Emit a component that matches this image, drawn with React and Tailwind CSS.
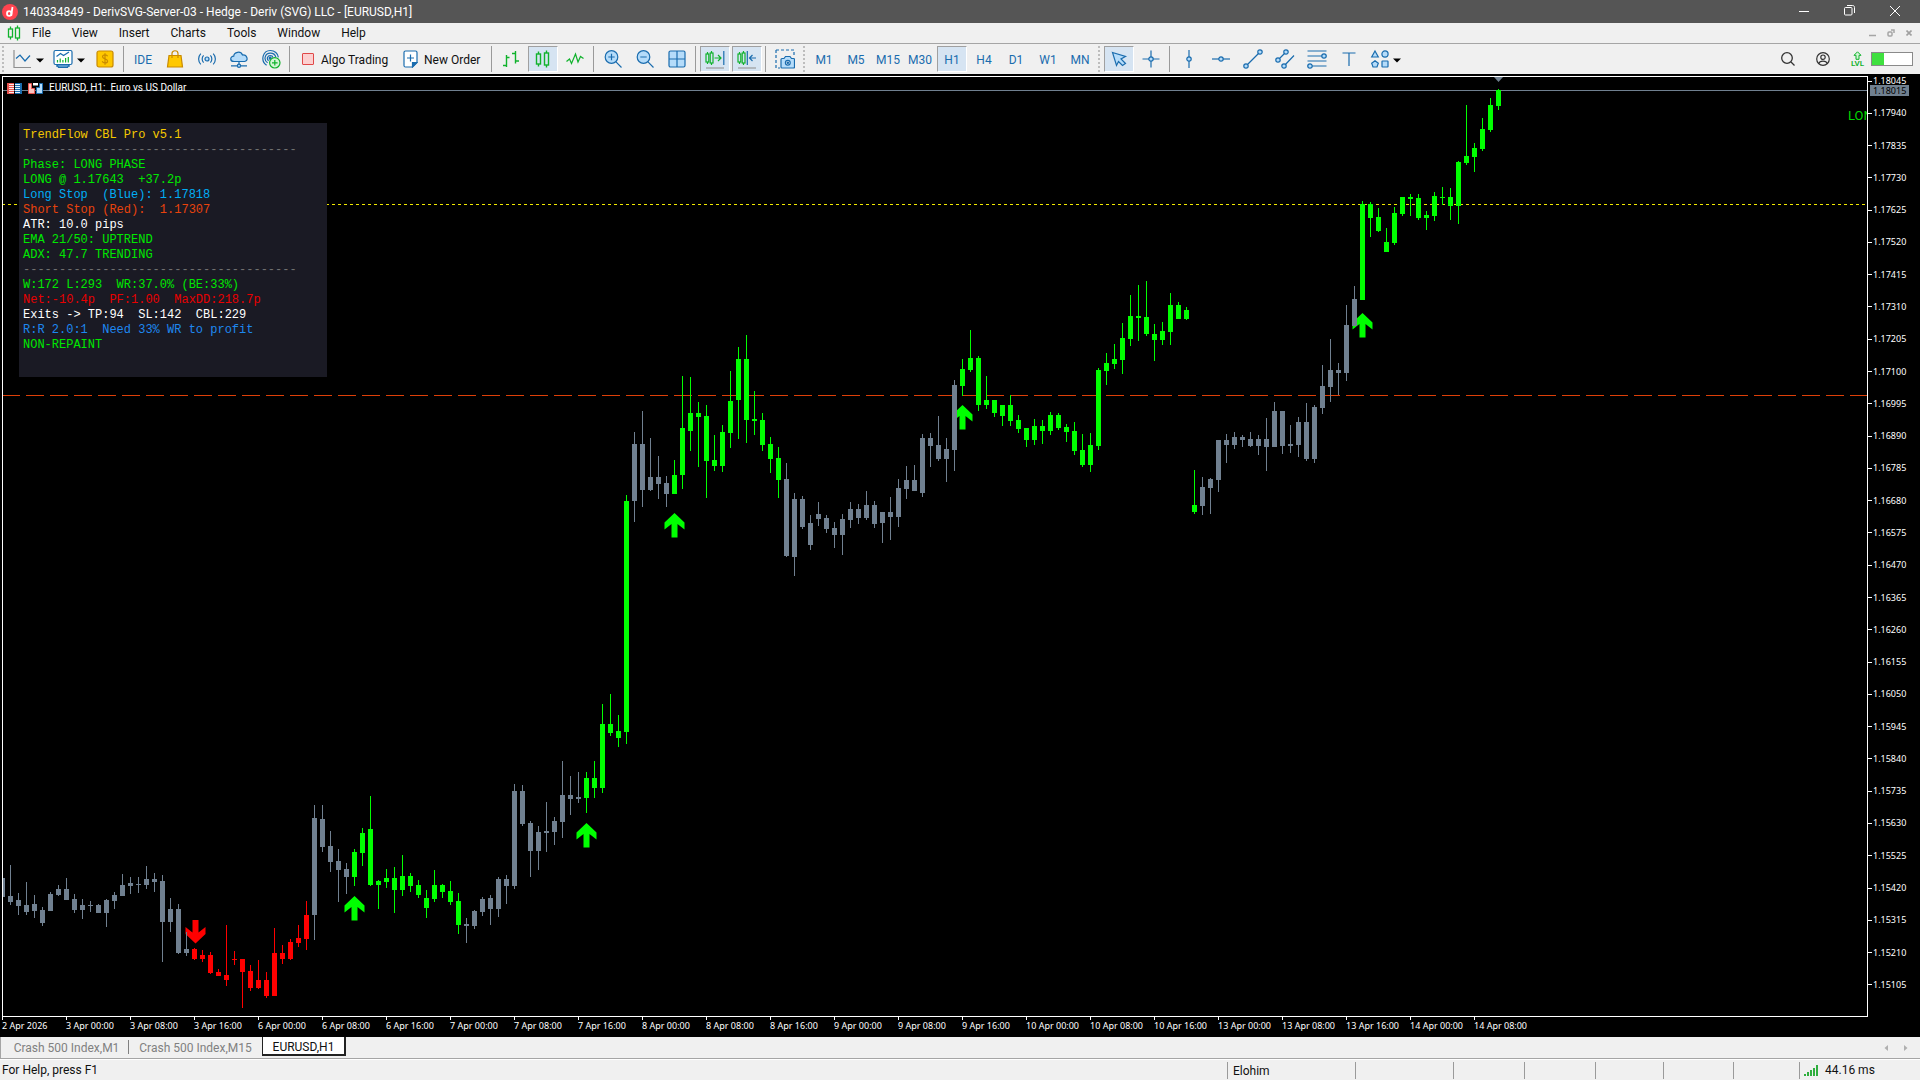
import React from "react";

const BLUE = "#1a6cae";
const SKY = "#b5dcfa";
const GREEN = "#10b22c";
const AMBER = "#c98a00";

const GRAY = "#708090";
const LIME = "#00ff00";
const RED = "#ff0000";

const PITCH = 8;

/* Runs of candles that share a colour; each candle is [high, bodyTop, bodyBottom, low]. */
const RUNS = [
  [GRAY, [
    [878, 878, 897, 897], [865, 896, 902, 905], [893, 900, 906, 915], [882, 905, 912, 915], [895, 904, 911, 918],
    [907, 910, 923, 926], [892, 894, 911, 911], [885, 889, 895, 896], [878, 889, 900, 900], [894, 899, 910, 913],
    [899, 905, 910, 919], [901, 905, 906, 912], [904, 905, 913, 913], [899, 900, 913, 927], [892, 895, 901, 909],
    [874, 885, 896, 896], [877, 883, 886, 894], [877, 884, 885, 893], [866, 879, 885, 889], [873, 879, 882, 892],
    [875, 881, 922, 962], [898, 909, 922, 932], [904, 909, 953, 954], [932, 949, 953, 956],
  ]],
  [RED, [
    [948, 949, 959, 960], [950, 955, 959, 962], [952, 955, 973, 974], [969, 972, 976, 976], [925, 975, 980, 986],
    [951, 959, 960, 965], [959, 959, 972, 1008], [965, 971, 988, 991], [960, 980, 988, 989], [972, 980, 996, 998],
    [928, 953, 996, 996], [945, 953, 959, 964], [939, 942, 959, 960], [925, 938, 943, 947], [901, 915, 939, 950],
  ]],
  [GRAY, [
    [805, 818, 915, 940], [805, 819, 847, 852], [831, 846, 862, 872], [849, 861, 870, 902], [863, 869, 877, 894],
  ]],
  [LIME, [
    [849, 852, 877, 886], [828, 833, 853, 866], [796, 829, 885, 886], [880, 881, 885, 909], [869, 878, 882, 888],
    [867, 878, 890, 913], [855, 876, 890, 896], [873, 876, 886, 892], [880, 885, 895, 898], [890, 898, 908, 918],
    [870, 885, 899, 902], [884, 885, 892, 898], [881, 891, 902, 905], [893, 901, 925, 934],
  ]],
  [GRAY, [
    [918, 924, 926, 943], [910, 911, 926, 929], [897, 899, 912, 916], [895, 898, 909, 925], [877, 879, 909, 917],
    [875, 879, 886, 904], [784, 791, 886, 889], [785, 791, 824, 826], [821, 823, 851, 877], [826, 832, 851, 870],
    [802, 831, 833, 852], [817, 821, 832, 845], [761, 795, 822, 838], [776, 795, 799, 815], [772, 797, 799, 803],
  ]],
  [LIME, [
    [772, 778, 798, 813], [761, 778, 788, 798], [704, 724, 788, 793], [694, 724, 733, 736], [715, 731, 738, 747],
    [495, 501, 732, 744],
  ]],
  [GRAY, [
    [432, 444, 501, 522], [411, 444, 490, 507], [438, 477, 490, 491], [456, 477, 484, 499], [476, 483, 494, 507],
  ]],
  [LIME, [
    [460, 475, 494, 494], [376, 428, 475, 489], [377, 413, 431, 451], [402, 413, 417, 467], [405, 416, 461, 498],
    [435, 460, 466, 471], [425, 432, 466, 472], [371, 401, 433, 448], [347, 359, 400, 439], [335, 359, 420, 443],
    [391, 419, 421, 435], [413, 420, 445, 451], [437, 444, 459, 473], [447, 458, 480, 498],
  ]],
  [GRAY, [
    [463, 479, 556, 557], [493, 499, 557, 576], [496, 499, 527, 529], [515, 523, 545, 550], [502, 514, 519, 526],
    [515, 518, 529, 533], [522, 528, 535, 548], [514, 519, 535, 555], [502, 509, 520, 528], [504, 509, 518, 524],
    [491, 505, 518, 520], [501, 505, 524, 528], [512, 512, 523, 543], [497, 512, 517, 540], [479, 488, 517, 527],
    [466, 480, 489, 499], [465, 480, 491, 491], [434, 438, 493, 497], [433, 438, 446, 467], [416, 445, 459, 461],
    [438, 449, 459, 482], [380, 385, 450, 471],
  ]],
  [LIME, [
    [359, 369, 386, 396], [330, 358, 370, 372], [356, 358, 405, 411], [376, 400, 405, 409], [400, 400, 413, 417],
    [405, 405, 416, 426], [395, 405, 421, 426], [415, 420, 429, 433], [428, 428, 440, 447], [419, 426, 440, 445],
    [420, 426, 431, 444], [412, 415, 431, 435], [413, 415, 428, 430], [424, 427, 432, 442], [422, 431, 451, 455],
    [434, 450, 465, 467], [433, 445, 465, 472], [368, 370, 446, 450], [353, 363, 371, 385], [344, 359, 364, 369],
    [323, 338, 360, 374], [295, 316, 339, 346], [285, 316, 318, 341], [281, 317, 334, 336], [324, 334, 340, 361],
    [322, 331, 340, 345], [293, 305, 332, 345], [302, 305, 319, 319], [307, 310, 319, 320], [470, 505, 512, 514],
  ]],
  [GRAY, [
    [477, 487, 506, 515], [478, 479, 488, 514], [440, 440, 480, 492], [434, 440, 445, 463], [432, 437, 445, 449],
    [435, 437, 440, 447], [432, 439, 446, 447], [435, 439, 446, 455], [418, 439, 447, 471], [402, 411, 447, 447],
    [411, 411, 446, 454], [425, 444, 446, 453], [417, 422, 445, 457], [403, 422, 459, 461], [405, 407, 459, 463],
    [365, 386, 408, 414], [339, 370, 387, 402], [363, 370, 373, 395], [305, 325, 373, 381], [286, 299, 326, 326],
  ]],
  [LIME, [
    [201, 204, 300, 300], [202, 204, 218, 237], [208, 217, 231, 232], [228, 242, 252, 252], [207, 213, 243, 245],
    [197, 197, 214, 216], [194, 197, 199, 216], [194, 198, 218, 220], [211, 215, 218, 230], [192, 196, 216, 221],
    [187, 197, 198, 205], [188, 197, 206, 220], [161, 162, 206, 224], [105, 156, 163, 165], [143, 148, 157, 172],
    [118, 129, 149, 151], [98, 105, 130, 132], [89, 90, 106, 110],
  ]],
];

const CANDLES = RUNS.flatMap(([color, list]) => list.map((c) => [color, ...c]));

/* Entry signals: [candle index, y of the arrow's top, direction] */
const SIGNALS = [
  [24, 920, "down"],
  [44, 896, "up"],
  [73, 823, "up"],
  [84, 513, "up"],
  [120, 405, "up"],
  [170, 313, "up"],
];

const PRICES = Array.from({ length: 29 }, (_, i) => ((118045 - i * 105) / 100000).toFixed(5));

const TIMES = [
  "2 Apr 2026", "3 Apr 00:00", "3 Apr 08:00", "3 Apr 16:00", "6 Apr 00:00", "6 Apr 08:00", "6 Apr 16:00",
  "7 Apr 00:00", "7 Apr 08:00", "7 Apr 16:00", "8 Apr 00:00", "8 Apr 08:00", "8 Apr 16:00", "9 Apr 00:00",
  "9 Apr 08:00", "9 Apr 16:00", "10 Apr 00:00", "10 Apr 08:00", "10 Apr 16:00", "13 Apr 00:00", "13 Apr 08:00",
  "13 Apr 16:00", "14 Apr 00:00", "14 Apr 08:00",
];

const RULE = "-".repeat(38);

const PANEL = [
  ["TrendFlow CBL Pro v5.1", "text-[#f5c800]"],
  [RULE, "text-[#707070]"],
  ["Phase: LONG PHASE", "text-[#00e800]"],
  ["LONG @ 1.17643  +37.2p", "text-[#00e800]"],
  ["Long Stop  (Blue): 1.17818", "text-[#00aef5]"],
  ["Short Stop (Red):  1.17307", "text-[#e8430c]"],
  ["ATR: 10.0 pips", "text-white"],
  ["EMA 21/50: UPTREND", "text-[#00e800]"],
  ["ADX: 47.7 TRENDING", "text-[#00e800]"],
  [RULE, "text-[#707070]"],
  ["W:172 L:293  WR:37.0% (BE:33%)", "text-[#00e800]"],
  ["Net:-10.4p  PF:1.00  MaxDD:218.7p", "text-[#e80000]"],
  ["Exits -> TP:94  SL:142  CBL:229", "text-white"],
  ["R:R 2.0:1  Need 33% WR to profit", "text-[#1e88f0]"],
  ["NON-REPAINT", "text-[#00e800]"],
];

function Icon({ children, size = 20, stroke = BLUE, fill = "none", width = 1.2 }) {
  return (
    <svg
      width={size}
      height={size}
      viewBox="0 0 20 20"
      fill={fill}
      stroke={stroke}
      strokeWidth={width}
      aria-hidden="true"
      className="shrink-0"
    >
      {children}
    </svg>
  );
}

const DropArrow = () => (
  <svg width="8" height="5" viewBox="0 0 8 5" aria-hidden="true" className="mt-0.5 shrink-0">
    <path d="M0 0.5H8L4 4.5Z" fill="#000" />
  </svg>
);

const icons = {
  line: (
    <Icon>
      <path d="M2 1V18.5H19" stroke="#8f8f8f" />
      <path d="M4 9.5L8 6L13 12L18 6.5" />
    </Icon>
  ),
  profile: (
    <Icon>
      <path d="M3.5 15L5.5 18.5H14.5L16.5 15" fill={SKY} />
      <rect x="1" y="1.5" width="18" height="14" rx="1.5" fill="#fff" />
      <path d="M3.5 7.5L7.5 4.5L10.5 6.5L16 3" />
      <path d="M4.5 13.5V11M7.2 13.5V9.5M9.9 13.5V11M12.6 13.5V9M15.3 13.5V8" stroke={GREEN} />
      <path d="M3 17H17" />
    </Icon>
  ),
  dollar: (
    <Icon stroke={AMBER}>
      <rect x="2" y="2" width="16" height="16" rx="2" fill="#ffc800" />
      <path d="M12.6 7.3C12.2 6.3 11.2 5.9 10 5.9C8.5 5.9 7.5 6.7 7.5 7.8C7.5 10.4 12.6 9.3 12.6 12C12.6 13.2 11.5 14 10 14C8.6 14 7.6 13.4 7.2 12.3M10 4.3V15.7" />
    </Icon>
  ),
  bag: (
    <Icon stroke={AMBER}>
      <path d="M4 6.5H16L17.5 18H2.5Z" fill="#ffc800" />
      <path d="M7 9V4.5C7 0.8 13 0.8 13 4.5V9" />
    </Icon>
  ),
  signal: (
    <Icon>
      <circle cx="10" cy="10" r="2" fill={SKY} />
      <path d="M6.6 6.4C4.7 8.3 4.7 11.7 6.6 13.6M13.4 6.4C15.3 8.3 15.3 11.7 13.4 13.6M3.8 4.6C0.9 7.6 0.9 12.4 3.8 15.4M16.2 4.6C19.1 7.6 19.1 12.4 16.2 15.4" />
    </Icon>
  ),
  cloud: (
    <Icon>
      <path d="M5 12.5C0.7 12.5 0.7 7.3 4.7 7.2C5 3 11.6 1.4 13.5 6C18.3 5.6 20 11.9 15.5 12.5Z" fill={SKY} />
      <path d="M10 12.5V15.5M2 16.8H8M12 16.8H18" />
      <circle cx="10" cy="16.8" r="1.6" fill={SKY} />
    </Icon>
  ),
  radar: (
    <Icon>
      <path d="M5.6 16.3C-1 11.5 1.8 1.5 9.4 1.5C13.6 1.5 17 4.6 17.4 8.4M6.6 13.8C2 10.6 4 4.2 9.4 4.2C12 4.2 14.2 5.8 14.8 8.2M7.6 11.7C5.2 9.6 6.6 6.7 9.2 6.7C10.7 6.7 11.8 7.6 12 8.6" />
      <circle cx="9.2" cy="9.2" r="1" fill={BLUE} />
      <circle cx="13.8" cy="13.8" r="5.2" fill="#d3f5d6" stroke={GREEN} />
      <path d="M13.8 11V16.6M11 13.8H16.6" stroke={GREEN} />
    </Icon>
  ),
  bars: (
    <Icon stroke={GREEN} width={1.4}>
      <path d="M5.5 6V18M2 16.5H5.5M5.5 8.5H8.5M14.5 2V14.5M11 4.5H14.5M14.5 12H18" />
    </Icon>
  ),
  candles: (
    <Icon stroke={GREEN} width={1.4}>
      <path d="M5.5 2.5V5M5.5 15V17.5M13.5 1.5V4M13.5 16V18.5" />
      <rect x="3.5" y="5" width="4" height="10" />
      <rect x="11.5" y="4" width="4" height="12" />
    </Icon>
  ),
  zigzag: (
    <Icon stroke={GREEN}>
      <path d="M1.5 12.5L4.5 10L6.5 14.5L10.5 5L13 13L15.5 7.5L18.5 9.5" />
    </Icon>
  ),
  zoomIn: (
    <Icon>
      <circle cx="8.5" cy="8" r="6.3" fill={SKY} />
      <path d="M13 12.8L18.5 18.5M8.5 4.8V11.2M5.3 8H11.7" />
    </Icon>
  ),
  zoomOut: (
    <Icon>
      <circle cx="8.5" cy="8" r="6.3" fill={SKY} />
      <path d="M13 12.8L18.5 18.5M5.3 8H11.7" />
    </Icon>
  ),
  grid: (
    <Icon>
      <rect x="2" y="2" width="16" height="16" rx="1.5" fill={SKY} />
      <path d="M10 2V18M2 10H18" />
    </Icon>
  ),
  scroll: (
    <Icon>
      <g stroke={GREEN}>
        <path d="M2.5 3V5M2.5 13V15M6.5 2V4M6.5 14V16" />
        <rect x="1" y="5" width="2.8" height="8" />
        <rect x="5.2" y="4" width="2.8" height="10" />
        <path d="M9.5 9H16M13 6L16 9L13 12" />
      </g>
      <path d="M18.8 2V16" />
      <path d="M1 19H19" stroke="#9a9a9a" />
    </Icon>
  ),
  shift: (
    <Icon>
      <g stroke={GREEN}>
        <path d="M2.5 3V5M2.5 13V15M6.5 2V4M6.5 14V16" />
        <rect x="1" y="5" width="2.8" height="8" />
        <rect x="5.2" y="4" width="2.8" height="10" />
      </g>
      <path d="M10.3 2V16M12.5 9H19M15.5 6L12.5 9L15.5 12" />
      <path d="M1 19H19" stroke="#9a9a9a" />
    </Icon>
  ),
  camera: (
    <Icon>
      <path d="M1 1H19V7M1 1V19H5" strokeDasharray="3 2" />
      <path d="M6 10.5C6 9.8 6.5 9.5 7 9.5H9L10.5 7.5H15L16.5 9.5H18.5C19 9.5 19.5 9.8 19.5 10.5V18C19.5 18.6 19 19 18.5 19H7C6.5 19 6 18.6 6 18Z" fill={SKY} />
      <circle cx="12.8" cy="13.8" r="2.4" fill="#fff" />
      <circle cx="12.8" cy="13.8" r="0.7" fill={BLUE} />
    </Icon>
  ),
  cursor: (
    <Icon>
      <path d="M3.5 3.5L16.5 7.5L12 10L16.5 14.5L13.5 16.5L9.5 12.5L7.5 16.5Z" fill={SKY} />
    </Icon>
  ),
  cross: (
    <Icon>
      <path d="M10 1.5V18.5M1.5 10H18.5" />
      <circle cx="10" cy="10" r="2.2" fill={SKY} />
    </Icon>
  ),
  vline: (
    <Icon>
      <path d="M10 1V19" />
      <circle cx="10" cy="10" r="2.2" fill={SKY} />
    </Icon>
  ),
  hline: (
    <Icon>
      <path d="M1 10H19" />
      <circle cx="10" cy="10" r="2.2" fill={SKY} />
    </Icon>
  ),
  trend: (
    <Icon>
      <path d="M3 17L17 3" />
      <circle cx="3" cy="17" r="2.2" fill={SKY} />
      <circle cx="17" cy="3" r="2.2" fill={SKY} />
    </Icon>
  ),
  channel: (
    <Icon>
      <path d="M3 11L11 3M9 17L19 6.5" />
      <circle cx="3" cy="11" r="2.2" fill={SKY} />
      <circle cx="11" cy="3" r="2.2" fill={SKY} />
      <circle cx="9" cy="17" r="2.2" fill={SKY} />
    </Icon>
  ),
  fibo: (
    <Icon>
      <path d="M0.5 2H19.5M0.5 7H19.5M0.5 12H19.5M0.5 17H19.5" />
      <circle cx="17" cy="7" r="2.2" fill={SKY} />
      <circle cx="3" cy="17" r="2.2" fill={SKY} />
    </Icon>
  ),
  label: (
    <Icon>
      <path d="M3.5 4H16.5M10 4V17" />
    </Icon>
  ),
  shapes: (
    <Icon>
      <path d="M5 2L8.3 8H1.7Z" fill={SKY} />
      <circle cx="15" cy="5" r="3.1" fill={SKY} />
      <path d="M5 11.8L8.3 14.2L7 18H3L1.7 14.2Z" fill={SKY} />
      <rect x="12" y="12" width="6" height="6" rx="0.5" fill={SKY} />
    </Icon>
  ),
};

const Sep = () => <div className="ml-[3px] mr-1 h-[26px] w-px shrink-0 bg-[#9a9a9a]" />;

const Grip = () => <div className="ml-[3px] mr-1 h-[26px] w-0 shrink-0 border-l-2 border-dotted border-[#bdbdbd]" />;

const Group = ({ children }) => <div className="flex shrink-0 gap-0.5">{children}</div>;

function Tool({ label, on = false, children }) {
  return (
    <button
      type="button"
      aria-label={label}
      aria-pressed={on}
      className={
        "flex h-[26px] w-[30px] items-center justify-center border " +
        (on ? "border-b-white border-l-[#a0a0a0] border-r-white border-t-[#a0a0a0] bg-[#d6e4f2]" : "border-transparent")
      }
    >
      {children}
    </button>
  );
}

function TitleBar() {
  return (
    <header className="flex h-[23px] shrink-0 items-center bg-[#555555] pl-0.5 pr-0.5 text-white">
      <svg width="16" height="16" viewBox="0 0 16 16" aria-hidden="true">
        <circle cx="8" cy="8" r="8" fill="#ff444f" />
        <g fill="none" stroke="#fff" strokeWidth="1.8">
          <ellipse cx="7.2" cy="9.5" rx="2.2" ry="2.4" />
          <path d="M10.5 3L9.2 11.8" />
        </g>
      </svg>
      <h1 className="ml-[5px] text-[12px] leading-4">140334849 - DerivSVG-Server-03 - Hedge - Deriv (SVG) LLC - [EURUSD,H1]</h1>
      <div className="ml-auto flex pb-0.5">
        <button type="button" aria-label="Minimize" className="flex h-5 w-[46px] items-center justify-center">
          <svg width="10" height="10" viewBox="0 0 10 10"><path d="M0 5.5H10" stroke="#fff" /></svg>
        </button>
        <button type="button" aria-label="Restore" className="flex h-5 w-[45px] items-center justify-center">
          <svg width="11" height="11" viewBox="0 0 11 11" fill="none" stroke="#fff">
            <rect x="0.5" y="2.5" width="7.5" height="7.5" rx="1" />
            <path d="M3 0.5H8.5C9.8 0.5 10.5 1.2 10.5 2.5V8" />
          </svg>
        </button>
        <button type="button" aria-label="Close" className="flex h-5 w-[46px] items-center justify-center">
          <svg width="10" height="10" viewBox="0 0 10 10"><path d="M0 0L10 10M10 0L0 10" stroke="#fff" /></svg>
        </button>
      </div>
    </header>
  );
}

function MenuBar() {
  return (
    <nav className="flex h-[21px] shrink-0 items-center border-b border-[#a5a5a5] pl-[7px] pr-2">
      <svg width="14" height="16" viewBox="0 0 14 16" fill="none" stroke={GREEN} strokeWidth="1.3" aria-hidden="true">
        <path d="M3.5 1.5V4M3.5 12V14.5M10.5 0.5V3M10.5 13V15.5" />
        <rect x="1.5" y="4" width="4" height="8" />
        <rect x="8.5" y="3" width="4" height="10" />
      </svg>
      <div className="ml-[11px] flex gap-[21px]">
        {["File", "View", "Insert", "Charts", "Tools", "Window", "Help"].map((m) => (
          <button key={m} type="button" className="leading-4">{m}</button>
        ))}
      </div>
      <div className="ml-auto flex items-center gap-[11px]">
        <button type="button" aria-label="Minimize chart">
          <svg width="7" height="8" viewBox="0 0 7 8"><path d="M0 6.5H7" stroke="#a5a5a5" strokeWidth="1.5" /></svg>
        </button>
        <button type="button" aria-label="Restore chart">
          <svg width="8" height="8" viewBox="0 0 8 8" fill="none" stroke="#a5a5a5" strokeWidth="1.5">
            <rect x="1" y="3" width="4" height="4" rx="1" />
            <path d="M4 1H7V4" />
          </svg>
        </button>
        <button type="button" aria-label="Close chart">
          <svg width="6" height="6" viewBox="0 0 6 6"><path d="M0.5 0.5L5.5 5.5M5.5 0.5L0.5 5.5" stroke="#a0a0a0" strokeWidth="1.6" /></svg>
        </button>
      </div>
    </nav>
  );
}

function Toolbar() {
  return (
    <div className="flex h-[30px] shrink-0 items-center pr-[7px]" role="toolbar" aria-label="Standard">
      <div className="ml-0.5 mr-1 h-[26px] w-0 border-l-2 border-dotted border-[#bdbdbd]" />
      <button type="button" aria-label="New chart" className="flex w-[41px] items-center gap-1 pl-1">
        {icons.line}
        <DropArrow />
      </button>
      <button type="button" aria-label="Profiles" className="flex w-[41px] items-center gap-1 pl-1">
        {icons.profile}
        <DropArrow />
      </button>
      <Tool label="Market Watch">{icons.dollar}</Tool>
      <Sep />
      <Group>
        <Tool label="IDE"><span className="pt-0.5 text-[12px] text-[#1a6cae]">IDE</span></Tool>
        <Tool label="Market">{icons.bag}</Tool>
        <Tool label="Signals">{icons.signal}</Tool>
        <Tool label="VPS">{icons.cloud}</Tool>
        <Tool label="Copy trading">{icons.radar}</Tool>
      </Group>
      <Sep />
      <Group>
        <button type="button" className="flex h-[26px] w-[100px] items-center gap-[7px] whitespace-nowrap pl-2">
          <span className="size-3 shrink-0 rounded-[1px] border border-[#e04848] bg-[#fcd0d0]" />
          <span className="pt-0.5">Algo Trading</span>
        </button>
        <button type="button" className="flex h-[26px] w-[92px] items-center gap-[6px] whitespace-nowrap pl-[7px]">
          <svg width="15" height="18" viewBox="0 0 15 18" fill="none" stroke={BLUE} strokeWidth="1.2" className="shrink-0" aria-hidden="true">
            <path d="M1 2.5C1 1.5 1.5 1 2.5 1H12.5C13.5 1 14 1.5 14 2.5V12.5L9.5 17H2.5C1.5 17 1 16.5 1 15.5Z" fill="#fff" />
            <path d="M9.5 17V12.5H14Z" fill={BLUE} />
            <path d="M7.5 4.5V11.5M4 8H11" />
          </svg>
          <span className="pt-0.5">New Order</span>
        </button>
      </Group>
      <Sep />
      <Group>
        <Tool label="Bar chart">{icons.bars}</Tool>
        <Tool label="Candlesticks" on>{icons.candles}</Tool>
        <Tool label="Line chart">{icons.zigzag}</Tool>
      </Group>
      <Sep />
      <Group>
        <Tool label="Zoom in">{icons.zoomIn}</Tool>
        <Tool label="Zoom out">{icons.zoomOut}</Tool>
        <Tool label="Tile windows">{icons.grid}</Tool>
      </Group>
      <Sep />
      <Group>
        <Tool label="Auto scroll" on>{icons.scroll}</Tool>
        <Tool label="Chart shift" on>{icons.shift}</Tool>
      </Group>
      <Sep />
      <Tool label="Screenshot">{icons.camera}</Tool>
      <Grip />
      <Group>
        {["M1", "M5", "M15", "M30", "H1", "H4", "D1", "W1", "MN"].map((t) => (
          <Tool key={t} label={t} on={t === "H1"}>
            <span className="pt-0.5 text-[12px] text-[#1a6cae]">{t}</span>
          </Tool>
        ))}
      </Group>
      <Grip />
      <Group>
        <Tool label="Cursor" on>{icons.cursor}</Tool>
        <Tool label="Crosshair">{icons.cross}</Tool>
      </Group>
      <Sep />
      <Group>
        <Tool label="Vertical line">{icons.vline}</Tool>
        <Tool label="Horizontal line">{icons.hline}</Tool>
        <Tool label="Trendline">{icons.trend}</Tool>
        <Tool label="Channel">{icons.channel}</Tool>
        <Tool label="Fibonacci">{icons.fibo}</Tool>
        <Tool label="Text">{icons.label}</Tool>
        <button type="button" aria-label="Objects" className="flex items-center gap-[3px] pl-1">
          {icons.shapes}
          <DropArrow />
        </button>
      </Group>

      <div className="ml-auto flex items-center">
        <button type="button" aria-label="Search" className="mr-[21px]">
          <svg width="14" height="14" viewBox="0 0 14 14" fill="none" stroke="#333" strokeWidth="1.3">
            <circle cx="6" cy="6" r="5.3" />
            <path d="M10 10L13.5 13.5" />
          </svg>
        </button>
        <button type="button" aria-label="Account" className="mr-[21px]">
          <svg width="14" height="14" viewBox="0 0 14 14" fill="none" stroke="#333" strokeWidth="1.2">
            <circle cx="7" cy="7" r="6.3" />
            <circle cx="7" cy="5.2" r="2.2" />
            <path d="M2.8 11.5C3.6 8.2 10.4 8.2 11.2 11.5" />
          </svg>
        </button>
        <button type="button" aria-label="Level" className="mr-[7px] flex flex-col items-center text-[#10b22c]">
          <svg width="9" height="9" viewBox="0 0 9 9" fill="#d3f5d6" stroke={GREEN}>
            <path d="M4.5 0.8L8 4.3H6V8.3H3V4.3H1Z" />
          </svg>
          <span className="text-[8px] font-semibold leading-[8px]">LVL</span>
        </button>
        <div className="h-[14px] w-[42px] border border-[#8a8a8a] bg-white" role="meter" aria-label="Level progress" aria-valuenow={30}>
          <div className="h-full w-[30%] bg-[#3fe03f]" />
        </div>
      </div>
    </div>
  );
}

function Candle({ index, color, high, top, bottom, low }) {
  const x = 2 + index * PITCH;
  return (
    <g fill={color}>
      <rect x={x} y={high} width="1" height={low - high} />
      <rect x={x - 2} y={top} width="5" height={bottom - top} />
    </g>
  );
}

function Signal({ index, y, dir }) {
  const x = 2 + index * PITCH + 0.5;
  const up = "0,0 10,9.5 10,16.5 3,11 3,24.5 -3,24.5 -3,11 -10,16.5 -10,9.5";
  const down = "1,23.5 11,14 11,7 4,12.5 4,0 -2,0 -2,12.5 -9,7 -9,14";
  return (
    <polygon
      points={dir === "up" ? up : down}
      transform={`translate(${x} ${y})`}
      fill={dir === "up" ? LIME : RED}
    />
  );
}

function Plot() {
  return (
    <div className="relative min-w-0 flex-1 overflow-hidden border border-white">
      <svg width="100%" height="100%" className="absolute inset-0" role="img" aria-label="EURUSD H1 candlestick chart">
        <g transform="translate(-3 -77)">
          <line x1="2" x2="101%" y1="90.5" y2="90.5" stroke={GRAY} />
          <line x1="2" x2="101%" y1="204.5" y2="204.5" stroke="#f0e800" strokeDasharray="3 3" />
          <line x1="2" x2="101%" y1="395.5" y2="395.5" stroke="#dd3f08" strokeDasharray="18 6" />
          {SIGNALS.map(([i, y, dir]) => (
            <Signal key={i} index={i} y={y} dir={dir} />
          ))}
          {CANDLES.map(([color, high, top, bottom, low], i) => (
            <Candle key={i} index={i} color={color} high={high} top={top} bottom={bottom} low={low} />
          ))}
          <path d="M1494 77H1503L1498.5 82Z" fill={GRAY} />
        </g>
      </svg>

      <div className="absolute left-1 top-[5px] flex items-center gap-[6px]">
        <svg width="15" height="11" viewBox="0 0 15 11" aria-hidden="true">
          <rect width="7" height="11" fill="#e8544f" />
          <rect x="8" width="7" height="11" fill="#1a6cae" />
          <path d="M2 1.5H7M2 3.5H7M2 5.5H7M2 7.5H7M2 9.5H7" stroke="#ffe9e7" />
          <path d="M8 1.5H13M8 3.5H13M8 5.5H13M8 7.5H13M8 9.5H13" stroke="#dff0ff" />
        </svg>
        <svg width="15" height="11" viewBox="0 0 15 11" aria-hidden="true">
          <path d="M0.5 0.5H3.5V5.5H6.5V10.5H0.5Z" fill="#fbc4c0" stroke="#e8544f" />
          <path d="M14.5 0.5H11.5V4.5H8.5V10.5H14.5Z" fill="#b5dcfa" stroke="#1a6cae" />
          <path d="M5 0H10V2.5H5Z" fill="#fff" />
        </svg>
        <span className="whitespace-pre font-['Roboto',sans-serif] text-[10px] leading-3 text-white">EURUSD, H1:  Euro vs US Dollar</span>
      </div>

      <section
        aria-label="Indicator panel"
        className="absolute left-4 top-[46px] w-[308px] bg-[#1a1a24] px-1 pb-6 pt-[5px] font-['Liberation_Mono',monospace] text-[12px] leading-[15px]"
      >
        {PANEL.map(([text, color], i) => (
          <p key={i} className={"whitespace-pre " + color}>{text}</p>
        ))}
      </section>

      <div className="absolute right-0 top-[31px] w-[19px] whitespace-nowrap font-['Roboto',sans-serif] text-[13px] leading-4 text-[#00d800]">
        LON
      </div>
    </div>
  );
}

function PriceAxis() {
  return (
    <div className="relative w-[52px] shrink-0 pb-[27px]">
      <ul className="flex h-full flex-col justify-between">
        {PRICES.map((p) => (
          <li key={p} className="flex h-[10px] items-center gap-px leading-[10px]">
            <span className="h-px w-1 bg-white" />
            {p}
          </li>
        ))}
      </ul>
      <div className="absolute left-0.5 top-[9px] h-[11px] w-[39px] bg-[#708090] pl-[3px] leading-[11px] text-black">1.18015</div>
    </div>
  );
}

function Chart() {
  return (
    <main className="flex min-h-0 flex-1 flex-col overflow-hidden bg-black pl-0.5 pt-0.5 font-['Noto_Sans',sans-serif] text-[9px] text-white">
      <div className="flex min-h-0 flex-1">
        <Plot />
        <PriceAxis />
      </div>
      <ul className="flex h-5 shrink-0">
        {TIMES.map((t) => (
          <li key={t} className="w-16 shrink-0 whitespace-nowrap leading-3">
            <span className="block h-[3px] w-px bg-white" />
            {t}
          </li>
        ))}
      </ul>
    </main>
  );
}

function ChartTabs() {
  return (
    <div className="flex h-[22px] shrink-0 items-start border-b border-l border-[#a5a5a5] pr-3" role="tablist">
      <button type="button" role="tab" aria-selected="false" className="mt-0.5 w-[127px] pl-1 text-center leading-[18px] text-[#808080]">Crash 500 Index,M1</button>
      <span className="mt-[3px] h-[14px] w-px bg-[#808080]" />
      <button type="button" role="tab" aria-selected="false" className="mt-0.5 w-[133px] text-center leading-[18px] text-[#808080]">Crash 500 Index,M15</button>
      <button type="button" role="tab" aria-selected="true" className="h-[19px] w-[84px] border-b-2 border-l border-r-2 border-[#222] bg-white pt-0.5 leading-4">EURUSD,H1</button>
      <div className="ml-auto flex gap-4 pt-2">
        <button type="button" aria-label="Scroll left">
          <svg width="4" height="6" viewBox="0 0 4 6"><path d="M4 0V6L0.5 3Z" fill="#b0b0b0" /></svg>
        </button>
        <button type="button" aria-label="Scroll right">
          <svg width="4" height="6" viewBox="0 0 4 6"><path d="M0 0V6L3.5 3Z" fill="#b0b0b0" /></svg>
        </button>
      </div>
    </div>
  );
}

function StatusBar() {
  const cell = "h-[17px] shrink-0 border-l border-[#9a9a9a]";
  return (
    <footer className="flex h-[21px] shrink-0 items-center border-t border-white pl-0.5">
      <span className="flex-1">For Help, press F1</span>
      <span className={cell + " w-[128px] pl-[5px]"}>Elohim</span>
      <span className={cell + " w-[98px]"} />
      <span className={cell + " w-[71px]"} />
      <span className={cell + " w-[71px]"} />
      <span className={cell + " w-[68px]"} />
      <span className={cell + " w-[70px]"} />
      <span className={cell + " w-[66px]"} />
      <span className={cell + " flex w-[121px] items-center gap-[6px] pl-1"}>
        <svg width="15" height="11" viewBox="0 0 15 11" fill="#2fae3e" aria-hidden="true">
          <rect x="0" y="9" width="2" height="2" />
          <rect x="3" y="7" width="2" height="4" />
          <rect x="6" y="5" width="2" height="6" />
          <rect x="9" y="3" width="2" height="8" />
          <rect x="12" y="0" width="2" height="11" />
        </svg>
        44.16 ms
      </span>
    </footer>
  );
}

export default function App() {
  return (
    <div className="flex h-screen flex-col overflow-hidden bg-[#f0f0f0] font-['Roboto',sans-serif] text-[12px] text-[#111]">
      <TitleBar />
      <MenuBar />
      <Toolbar />
      <Chart />
      <ChartTabs />
      <StatusBar />
    </div>
  );
}
